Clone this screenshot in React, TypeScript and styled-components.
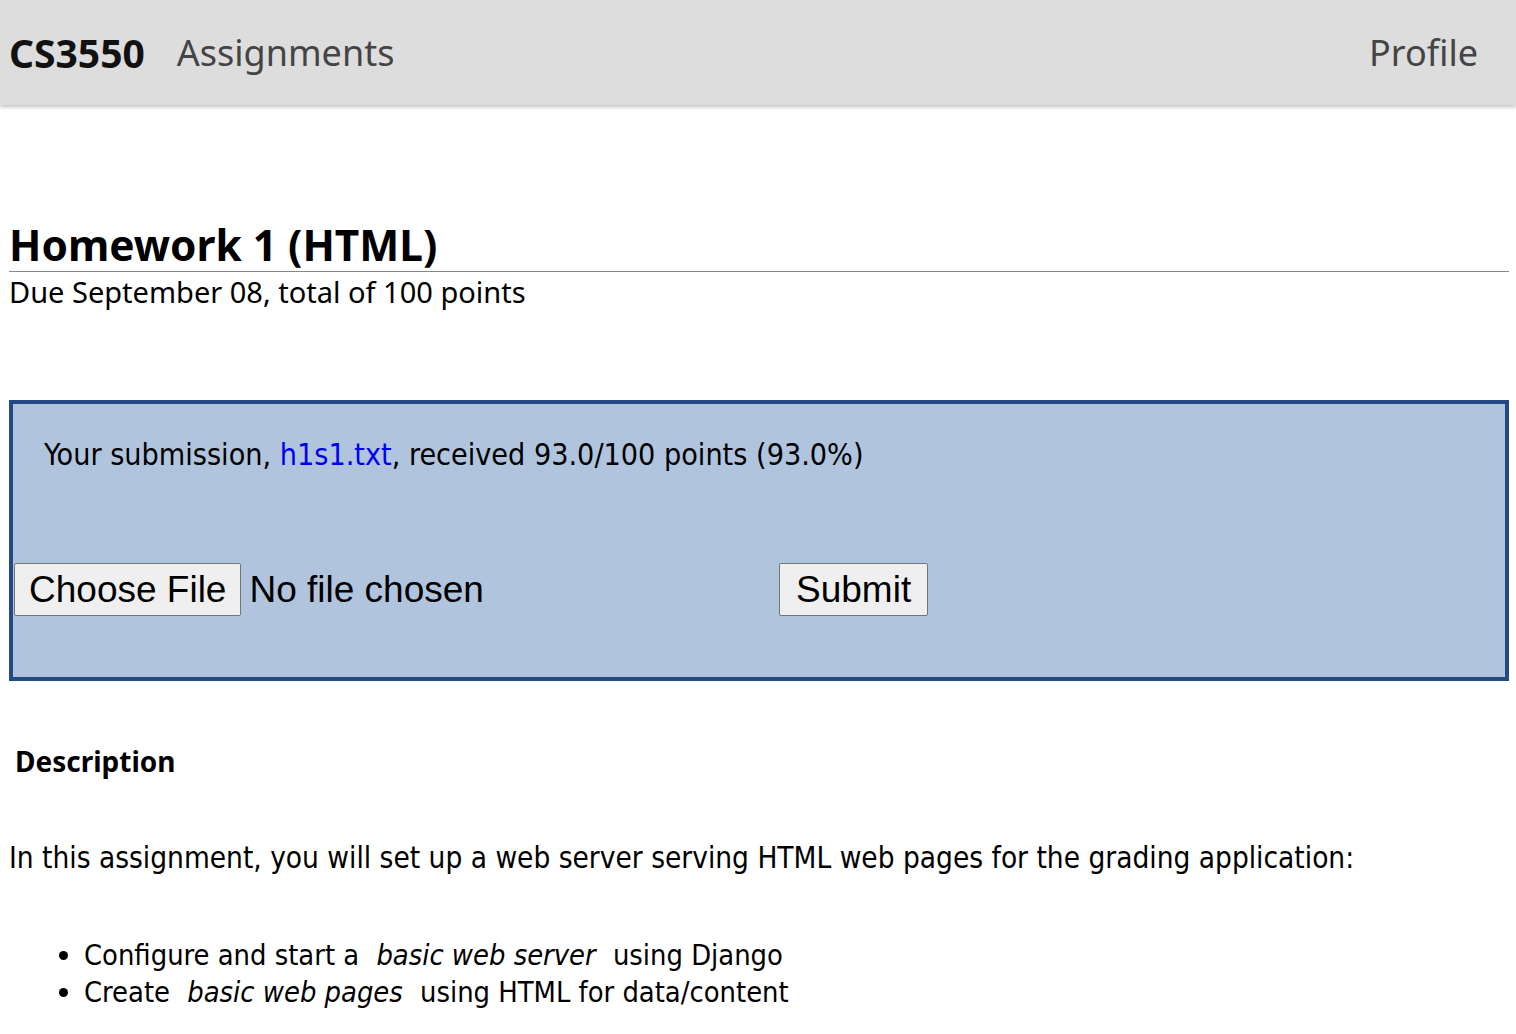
import styled, { createGlobalStyle } from "styled-components";

const GlobalStyle = createGlobalStyle`
  html, body {
    margin: 0;
    padding: 0;
    background: #ffffff;
    font-family: "Noto Sans", "DejaVu Sans", sans-serif;
    color: #000;
  }
`;

export default function App() {
  return (
    <>
      <GlobalStyle />
      <NavBarStyled>
        <BrandStyled>CS3550</BrandStyled>
        <NavLinkStyled>Assignments</NavLinkStyled>
        <NavSpacer />
        <NavLinkStyled>Profile</NavLinkStyled>
      </NavBarStyled>
      <MainStyled>
        <TitleStyled>Homework 1 (HTML)</TitleStyled>
        <SubtitleStyled>Due September 08, total of 100 points</SubtitleStyled>
        <SubmissionPanel>
          <SubmissionText>
            Your submission, <FileLink href="#">h1s1.txt</FileLink>, received 93.0/100 points (93.0%)
          </SubmissionText>
          <FormRow>
            <FilePicker>
              <NativeButton type="button">Choose File</NativeButton>
              <FileName>No file chosen</FileName>
            </FilePicker>
            <NativeButton type="submit" $wide>
              Submit
            </NativeButton>
          </FormRow>
        </SubmissionPanel>
        <SectionTitle>Description</SectionTitle>
        <Paragraph>
          In this assignment, you will set up a web server serving HTML web pages for the grading application:
        </Paragraph>
        <BulletList>
          <li>
            Configure and start a <em>basic web server</em> using Django
          </li>
          <li>
            Create <em>basic web pages</em> using HTML for data/content
          </li>
        </BulletList>
      </MainStyled>
    </>
  );
}

const NavBarStyled = styled.nav`
  height: 105px;
  background: #dddddd;
  box-shadow: 0 2px 4px rgba(0, 0, 0, 0.25);
  display: flex;
  align-items: center;
  padding: 0 38px 0 9px;
  gap: 32px;
`;

const BrandStyled = styled.span`
  font-weight: 700;
  font-size: 39px;
  color: #111;
`;

const NavLinkStyled = styled.a`
  font-size: 36px;
  color: #444;
  text-decoration: none;
`;

const NavSpacer = styled.div`
  flex: 1;
`;

const MainStyled = styled.main`
  padding: 0 7px 0 9px;
`;

const TitleStyled = styled.h1`
  margin: 114px 0 0;
  font-size: 42.4px;
  font-weight: 700;
  line-height: 52px;
  border-bottom: 1px solid #888;
`;

const SubtitleStyled = styled.div`
  font-size: 29px;
  line-height: 40px;
`;

const SubmissionPanel = styled.section`
  margin-top: 88px;
  background: #b0c4de;
  border: 4px solid #234a85;
  height: 281px;
  box-sizing: border-box;
  padding: 0 0 0 1px;
`;

const SubmissionText = styled.p`
  margin: 31px 0 0 30px;
  font-family: "DejaVu Sans", sans-serif;
  font-stretch: condensed;
  font-size: 30.2px;
  line-height: 40px;
`;

const FileLink = styled.a`
  color: #0000ee;
  text-decoration: none;
`;

const FormRow = styled.div`
  margin-top: 88px;
  display: flex;
  align-items: center;
`;

const FilePicker = styled.div`
  display: flex;
  align-items: center;
  width: 765px;
`;

const NativeButton = styled.button<{ $wide?: boolean }>`
  height: 53px;
  padding: 0 ${(p) => (p.$wide ? "16px" : "14px")};
  font-family: "Liberation Sans", Arial, sans-serif;
  font-size: 37px;
  line-height: 1;
  color: #000;
  background: #efefef;
  border: 1px solid #767676;
  border-radius: 2px;
`;

const FileName = styled.span`
  margin-left: 8px;
  font-family: "Liberation Sans", Arial, sans-serif;
  font-size: 37px;
`;

const SectionTitle = styled.h3`
  margin: 60px 0 0 6px;
  font-size: 28px;
  font-weight: 700;
  line-height: 40px;
`;

const Paragraph = styled.p`
  margin: 57px 0 0;
  font-family: "DejaVu Sans", sans-serif;
  font-stretch: condensed;
  font-size: 29.5px;
  line-height: 40px;
`;

const BulletList = styled.ul`
  margin: 59px 0 0;
  padding-left: 75px;
  font-family: "DejaVu Sans", sans-serif;
  font-stretch: condensed;
  font-size: 28.8px;
  line-height: 37px;

  em {
    margin: 0 9px;
  }
`;
